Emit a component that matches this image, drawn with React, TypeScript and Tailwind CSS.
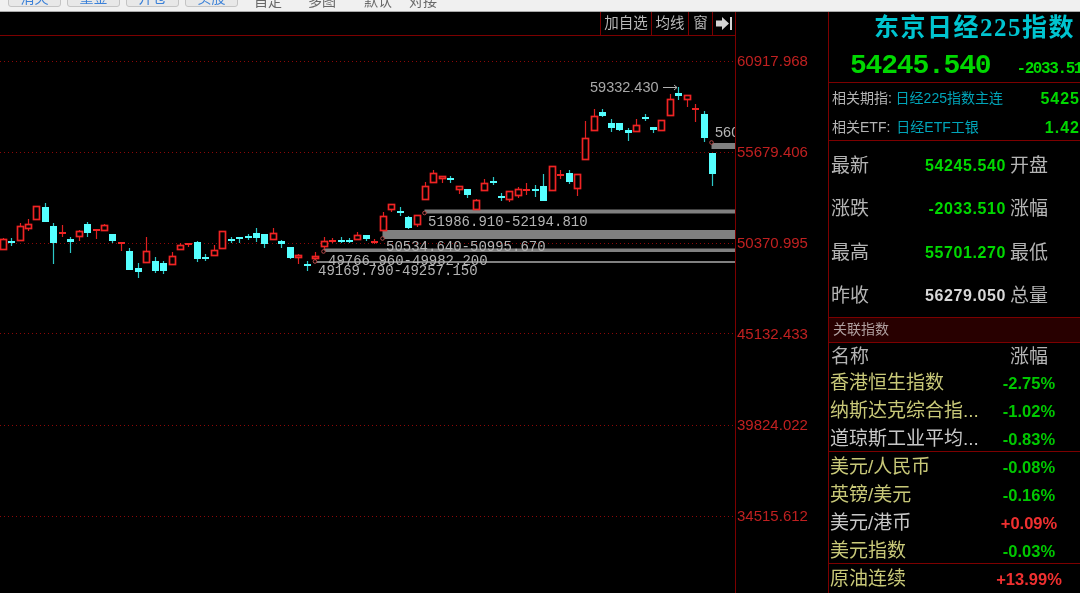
type Candle = [number, number, number, number, boolean];

// [high, bodyTop, bodyBottom, low, isUp]
const candles: Candle[] = [
  [238, 239, 249, 250, true], [238, 241, 243, 246, false], [223, 226, 240, 241, true], [219, 224, 228, 231, true],
  [206, 206, 219, 219, true], [203, 207, 222, 222, false], [223, 226, 243, 264, false], [225, 232, 233, 237, true],
  [237, 239, 242, 253, false], [230, 231, 236, 241, true], [222, 224, 233, 237, false], [229, 229, 230, 239, true],
  [224, 225, 230, 231, true], [234, 234, 241, 243, false], [242, 242, 243, 251, true], [248, 251, 270, 270, false],
  [263, 268, 272, 278, false], [237, 251, 262, 262, true], [257, 261, 271, 273, false], [261, 263, 271, 274, false],
  [252, 256, 264, 265, true], [243, 245, 249, 250, true], [243, 243, 244, 247, true], [241, 242, 259, 262, false],
  [254, 257, 259, 261, false], [245, 250, 255, 256, true], [231, 231, 248, 249, true], [237, 239, 240, 243, false],
  [237, 237, 238, 243, false], [234, 236, 237, 240, false], [228, 233, 238, 242, false], [234, 234, 244, 248, false],
  [228, 233, 239, 240, true], [240, 241, 244, 248, false], [247, 247, 258, 259, false], [254, 255, 257, 264, true],
  [261, 264, 265, 271, false], [252, 256, 258, 261, true], [237, 241, 246, 249, true], [238, 240, 241, 243, true],
  [237, 240, 241, 243, false], [238, 240, 241, 243, false], [232, 235, 239, 239, true], [235, 235, 239, 241, false],
  [239, 241, 242, 244, true], [212, 216, 230, 230, true], [204, 204, 209, 212, true], [207, 211, 212, 216, false],
  [216, 217, 228, 229, false], [215, 215, 224, 227, true], [182, 186, 199, 199, true], [170, 173, 182, 182, true],
  [176, 176, 178, 183, true], [176, 178, 179, 183, false], [186, 186, 189, 194, true], [189, 189, 195, 198, false],
  [199, 200, 209, 209, true], [179, 183, 190, 191, true], [177, 181, 182, 185, false], [193, 196, 198, 201, false],
  [191, 191, 199, 202, true], [187, 189, 195, 198, true], [183, 189, 190, 195, true], [185, 189, 190, 197, false],
  [174, 186, 201, 201, false], [166, 166, 190, 190, true], [170, 174, 175, 179, true], [170, 173, 182, 184, false],
  [174, 174, 188, 196, true], [121, 138, 159, 159, true], [109, 116, 130, 130, true], [109, 112, 116, 117, false],
  [119, 123, 128, 132, false], [123, 123, 130, 131, false], [128, 130, 133, 141, false], [119, 125, 131, 131, true],
  [114, 117, 118, 121, false], [127, 127, 130, 133, false], [120, 120, 130, 131, true], [94, 99, 115, 115, true],
  [87, 93, 96, 100, false], [95, 95, 99, 107, true], [104, 108, 109, 122, true], [111, 114, 138, 142, false],
  [153, 153, 174, 186, false],
];

const gridYs = [61, 152, 243, 333, 425, 516];

const gaps = [
  { x: 711.5, y: 143, h: 6, dotY: 142.5 },
  { x: 424.5, y: 209.5, h: 4, dotY: 213 },
  { x: 382.5, y: 230, h: 9, dotY: 238.5 },
  { x: 323.5, y: 248.5, h: 3.5, dotY: 251.5 },
  { x: 315, y: 261, h: 2, dotY: 261.5 },
];

const gapLabels = [
  { x: 428, y: 226, text: "51986.910-52194.810" },
  { x: 386, y: 251, text: "50534.640-50995.670" },
  { x: 328, y: 265, text: "49766.960-49982.200" },
  { x: 318, y: 275, text: "49169.790-49257.150" },
];

const axisLabels = ["60917.968", "55679.406", "50370.995", "45132.433", "39824.022", "34515.612"];

const stats = [
  ["最新", "54245.540", "text-[#00d800]", "开盘"],
  ["涨跌", "-2033.510", "text-[#00d800]", "涨幅"],
  ["最高", "55701.270", "text-[#00d800]", "最低"],
  ["昨收", "56279.050", "text-[#d8d8d8]", "总量"],
];

const groups = [
  {
    box: "h-[82px]",
    rows: [
      ["香港恒生指数", "-2.75%", false, false],
      ["纳斯达克综合指...", "-1.02%", false, false],
      ["道琼斯工业平均...", "-0.83%", false, true],
    ],
  },
  {
    box: "h-[112px] border-t border-[#7c0000] pt-[1px]",
    rows: [
      ["美元/人民币", "-0.08%", false, false],
      ["英镑/美元", "-0.16%", false, false],
      ["美元/港币", "+0.09%", true, true],
      ["美元指数", "-0.03%", false, false],
    ],
  },
  {
    box: "border-t border-[#7c0000] pt-[1px]",
    rows: [["原油连续", "+13.99%", true, false]],
  },
] as { box: string; rows: [string, string, boolean, boolean][] }[];

function CandleChart() {
  return (
    <svg width="735" height="535" viewBox="0 58 735 535" className="block" fontFamily="Liberation Mono, monospace">
      {gridYs.map((y) => (
        <line key={y} x1="0" x2="735" y1={y + 0.5} y2={y + 0.5} stroke="#8c0808" strokeDasharray="1 3" />
      ))}
      {gaps.map((g) => (
        <rect key={g.x} x={g.x} y={g.y} width={735 - g.x} height={g.h} fill="#808080" />
      ))}
      {candles.map(([high, top, bottom, low, up], i) => {
        const x = Math.round(2.7 + 8.445 * i) + 0.5;
        const color = up ? "#f02424" : "#55ffff";
        const flat = bottom - top < 2;
        return (
          <g key={i}>
            <line x1={x} x2={x} y1={high} y2={low} stroke={up ? "#e02020" : "#2cc8c8"} strokeWidth="1.2" />
            {flat ? (
              <rect x={x - 3.5} y={top} width="7" height="2" fill={color} />
            ) : up ? (
              <rect x={x - 3} y={top + 0.5} width="6" height={bottom - top} fill="#000" stroke={color} strokeWidth="1.7" />
            ) : (
              <rect x={x - 3.5} y={top} width="7" height={bottom - top} fill={color} />
            )}
          </g>
        );
      })}
      {gaps.map((g) => (
        <circle key={g.x} cx={g.x} cy={g.dotY} r="1.8" fill="#000" stroke="#b84848" />
      ))}
      {gapLabels.map((l) => (
        <text key={l.text} x={l.x} y={l.y} fontSize="14" fill="#b4b4b4">
          {l.text}
        </text>
      ))}
      <text x="590" y="91.5" fontSize="14.5" fill="#a8a8a8" fontFamily="Liberation Sans, sans-serif">
        59332.430
      </text>
      <path d="M663 87.5H677M674 85l3 2.5-3 2.5" fill="none" stroke="#b0b0b0" />
      <text x="715" y="137" fontSize="14.5" fill="#b4b4b4" fontFamily="Liberation Sans, sans-serif">
        560
      </text>
    </svg>
  );
}

function Toolbar() {
  return (
    <div className="flex h-[24px] justify-end border-b border-[#7c0000] text-[14.5px] leading-[23px] text-[#b8b8b8]">
      <div className="w-[51px] border-l border-[#7c0000] text-center">加自选</div>
      <div className="w-[37px] border-l border-[#7c0000] text-center">均线</div>
      <div className="w-[24px] border-l border-[#7c0000] text-center">窗</div>
      <div className="flex w-[23px] items-center justify-center border-l border-[#7c0000]">
        <svg width="16" height="13" viewBox="0 0 16 13">
          <path d="M0 3.5h6V0l7 6.5-7 6.5V9.5H0z" fill="#d4d4d4" />
          <rect x="14" y="0" width="2" height="13" fill="#d4d4d4" />
        </svg>
      </div>
    </div>
  );
}

function TopBar() {
  const tabs = ["消失", "重金", "开仓", "买股"];
  const links = [
    ["自定", "w-[54px]"],
    ["多图", "w-[56px]"],
    ["默认", "w-[45px]"],
    ["对接", "w-[40px]"],
  ];
  return (
    <div className="flex h-3 shrink-0 items-end overflow-hidden border-b border-[#a8a8a8] bg-[#f0f0f0] pb-[1px] pl-2">
      <div className="flex h-full gap-[6px]">
        {tabs.map((t) => (
          <div
            key={t}
            className="-mt-[10px] h-[17px] w-[53px] rounded-[3px] border border-[#c4c4c4] bg-[#e8e8e8] text-center text-[14px] leading-[15px] text-[#3a80d8]"
          >
            {t}
          </div>
        ))}
      </div>
      <div className="ml-4 flex h-full">
        {links.map(([t, w]) => (
          <div key={t} className={`${w} -mt-[8px] h-[18px] text-[14px] leading-[18px] text-[#686868]`}>
            {t}
          </div>
        ))}
      </div>
    </div>
  );
}

function Quote() {
  return (
    <div className="flex flex-1 flex-col overflow-hidden border-l border-[#7c0000]">
      <div className="h-[71px] shrink-0 border-b border-[#7c0000]">
        <div className="h-[31px] pl-[45px] pt-[1px] font-['Liberation_Serif','Noto_Sans_CJK_SC',serif] text-[25px] font-bold leading-[29px] tracking-[1.5px] whitespace-nowrap text-[#00c4d0]">
          东京日经225指数
        </div>
        <div className="flex items-baseline whitespace-nowrap pl-[21px] pt-[8px] font-['Liberation_Mono',monospace] leading-[30px]">
          <span className="text-[28px] font-bold tracking-[-1.2px] text-[#00d800]">54245.540</span>
          <span className="ml-[26px] text-[16px] font-bold tracking-[-1.4px] text-[#00d800]">-2033.51</span>
        </div>
      </div>
      <div className="h-[58px] shrink-0 border-b border-[#7c0000] pl-[3px] pt-[1px] text-[14px] leading-[29px] whitespace-nowrap">
        <div className="flex">
          <span className="w-[65px] text-[#b4b4b4]">相关期指:</span>
          <span className="w-[148px] text-[#00a4b8]">日经225指数主连</span>
          <span className="font-['Liberation_Sans',sans-serif] text-[16px] font-bold tracking-[1px] text-[#00d800]">5425</span>
        </div>
        <div className="flex">
          <span className="w-[65px] text-[#b4b4b4]">相关ETF:</span>
          <span className="w-[150px] text-[#00a4b8]">日经ETF工银</span>
          <span className="font-['Liberation_Sans',sans-serif] text-[16px] font-bold tracking-[1px] text-[#00d800]">1.42</span>
        </div>
      </div>
      <div className="flex h-[176px] shrink-0 flex-col pl-[2px] pt-[3px] text-[19px] whitespace-nowrap text-[#b4b4b4]">
        {stats.map(([a, v, c, b]) => (
          <div key={a} className="flex h-[43.5px] shrink-0 items-center">
            <span className="w-[40px]">{a}</span>
            <span className={`w-[135px] text-right font-['Liberation_Sans',sans-serif] text-[16px] font-bold tracking-[0.6px] ${c}`}>
              {v}
            </span>
            <span className="ml-[4px]">{b}</span>
          </div>
        ))}
      </div>
      <div className="h-[26px] shrink-0 border-y border-[#7c0000] bg-[#280000] pl-[4px] text-[14px] leading-[23px] text-[#b0a0a0]">
        关联指数
      </div>
      <div className="flex h-[26px] shrink-0 items-center pl-[2px] pt-[3px] text-[19px] text-[#b4b4b4]">
        <span className="w-[179px]">名称</span>
        <span>涨幅</span>
      </div>
      {groups.map((g) => (
        <div key={g.rows[0][0]} className={`${g.box} shrink-0`}>
          {g.rows.map(([name, value, up, light]) => (
            <div key={name} className="flex h-[28px] items-center pl-[1px] text-[19px] whitespace-nowrap">
              <span className={`w-[173px] overflow-hidden ${light ? "text-[#c8c8c8]" : "text-[#c8c878]"}`}>{name}</span>
              <span
                className={`flex w-[52px] justify-center font-['Liberation_Sans',sans-serif] text-[16.5px] font-bold ${
                  up ? "text-[#f03030]" : "text-[#00c800]"
                }`}
              >
                {value}
              </span>
            </div>
          ))}
        </div>
      ))}
    </div>
  );
}

export default function App() {
  return (
    <div className="flex h-[593px] w-[1080px] flex-col overflow-hidden bg-black font-['Liberation_Sans','Noto_Sans_CJK_SC',sans-serif] blur-[0.5px]">
      <TopBar />
      <div className="flex min-h-0 flex-1">
        <div className="w-[735px] shrink-0 overflow-hidden">
          <Toolbar />
          <div className="h-[22px]" />
          <CandleChart />
        </div>
        <div className="flex w-[93px] shrink-0 flex-col border-l border-[#7c0000] pl-[1px] pt-[35px] text-[15px] text-[#c02020]">
          {axisLabels.map((v) => (
            <div key={v} className="h-[91px] leading-[28px]">
              {v}
            </div>
          ))}
        </div>
        <Quote />
      </div>
    </div>
  );
}
